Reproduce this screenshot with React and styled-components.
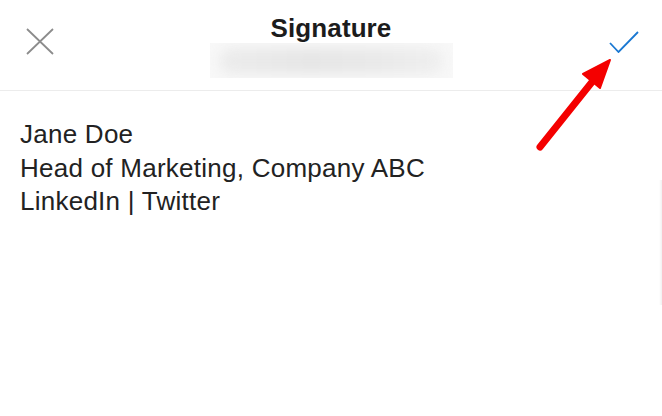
import React from 'react';
import styled, { createGlobalStyle } from 'styled-components';

const GlobalStyle = createGlobalStyle`
  html, body {
    margin: 0;
    padding: 0;
    background: #fff;
    font-family: "Liberation Sans", Arial, sans-serif;
  }
`;

const Screen = styled.div`
  position: relative;
  width: 662px;
  height: 416px;
  overflow: hidden;
  background: #fff;
`;

const Header = styled.div`
  height: 90px;
  display: grid;
  grid-template-columns: 80px 1fr 80px;
  align-items: start;
  border-bottom: 1px solid #ececec;
`;

const IconButton = styled.button`
  border: none;
  background: none;
  padding: 0;
  margin-top: ${p => p.top}px;
  justify-self: ${p => p.align};
  margin-left: ${p => p.left || 0}px;
  margin-right: ${p => p.right || 0}px;
  display: flex;
`;

const TitleBlock = styled.div`
  display: flex;
  flex-direction: column;
  align-items: center;
  padding-top: 14px;
`;

const Title = styled.h1`
  margin: 0;
  font-size: 26px;
  font-weight: 700;
  color: #1c1c1c;
  line-height: 28px;
  letter-spacing: 0.1px;
`;

const Blurred = styled.div`
  margin-top: 1px;
  width: 243px;
  height: 35px;
  overflow: hidden;
  background: #f8f8f8;
  display: flex;
  align-items: center;
`;

const BlurBand = styled.div`
  margin: 0 auto;
  width: 225px;
  height: 26px;
  border-radius: 13px;
  background: linear-gradient(90deg, #ececec 0%, #e6e6e6 40%, #e9e9e9 70%, #efefef 100%);
  filter: blur(6px);
`;

const Body = styled.div`
  padding: 27px 20px;
  font-size: 26px;
  line-height: 33.5px;
  letter-spacing: 0.25px;
  color: #222;
`;

const Line = styled.div``;

const EdgeShadow = styled.div`
  position: absolute;
  right: 0;
  top: 180px;
  width: 3px;
  height: 125px;
  background: linear-gradient(90deg, rgba(0,0,0,0), rgba(0,0,0,0.06));
`;

const Arrow = styled.svg`
  position: absolute;
  left: 0;
  top: 0;
  pointer-events: none;
`;

export default function App() {
  return (
    <Screen>
      <GlobalStyle />
      <Header>
        <IconButton top={28} align="start" left={26} aria-label="Close">
          <svg width="28" height="27" viewBox="0 0 28 27">
            <path d="M1 1 L27 26 M27 1 L1 26" stroke="#8c8c8c" strokeWidth="1.8" fill="none" />
          </svg>
        </IconButton>
        <TitleBlock>
          <Title>Signature</Title>
          <Blurred>
            <BlurBand />
          </Blurred>
        </TitleBlock>
        <IconButton top={31} align="end" right={23} aria-label="Done">
          <svg width="30" height="22" viewBox="0 0 30 22">
            <path d="M1 12 L9.5 21 L29 1" stroke="#1a78d2" strokeWidth="1.8" fill="none" />
          </svg>
        </IconButton>
      </Header>
      <Body>
        <Line>Jane Doe</Line>
        <Line>Head of Marketing, Company ABC</Line>
        <Line>LinkedIn | Twitter</Line>
      </Body>
      <EdgeShadow />
      <Arrow width="662" height="416">
        <line x1="540" y1="147" x2="592" y2="82" stroke="#f40000" strokeWidth="7" strokeLinecap="round" />
        <polygon points="610,60 583,74 600,88" fill="#f40000" stroke="#f40000" strokeWidth="2" strokeLinejoin="round" />
      </Arrow>
    </Screen>
  );
}
